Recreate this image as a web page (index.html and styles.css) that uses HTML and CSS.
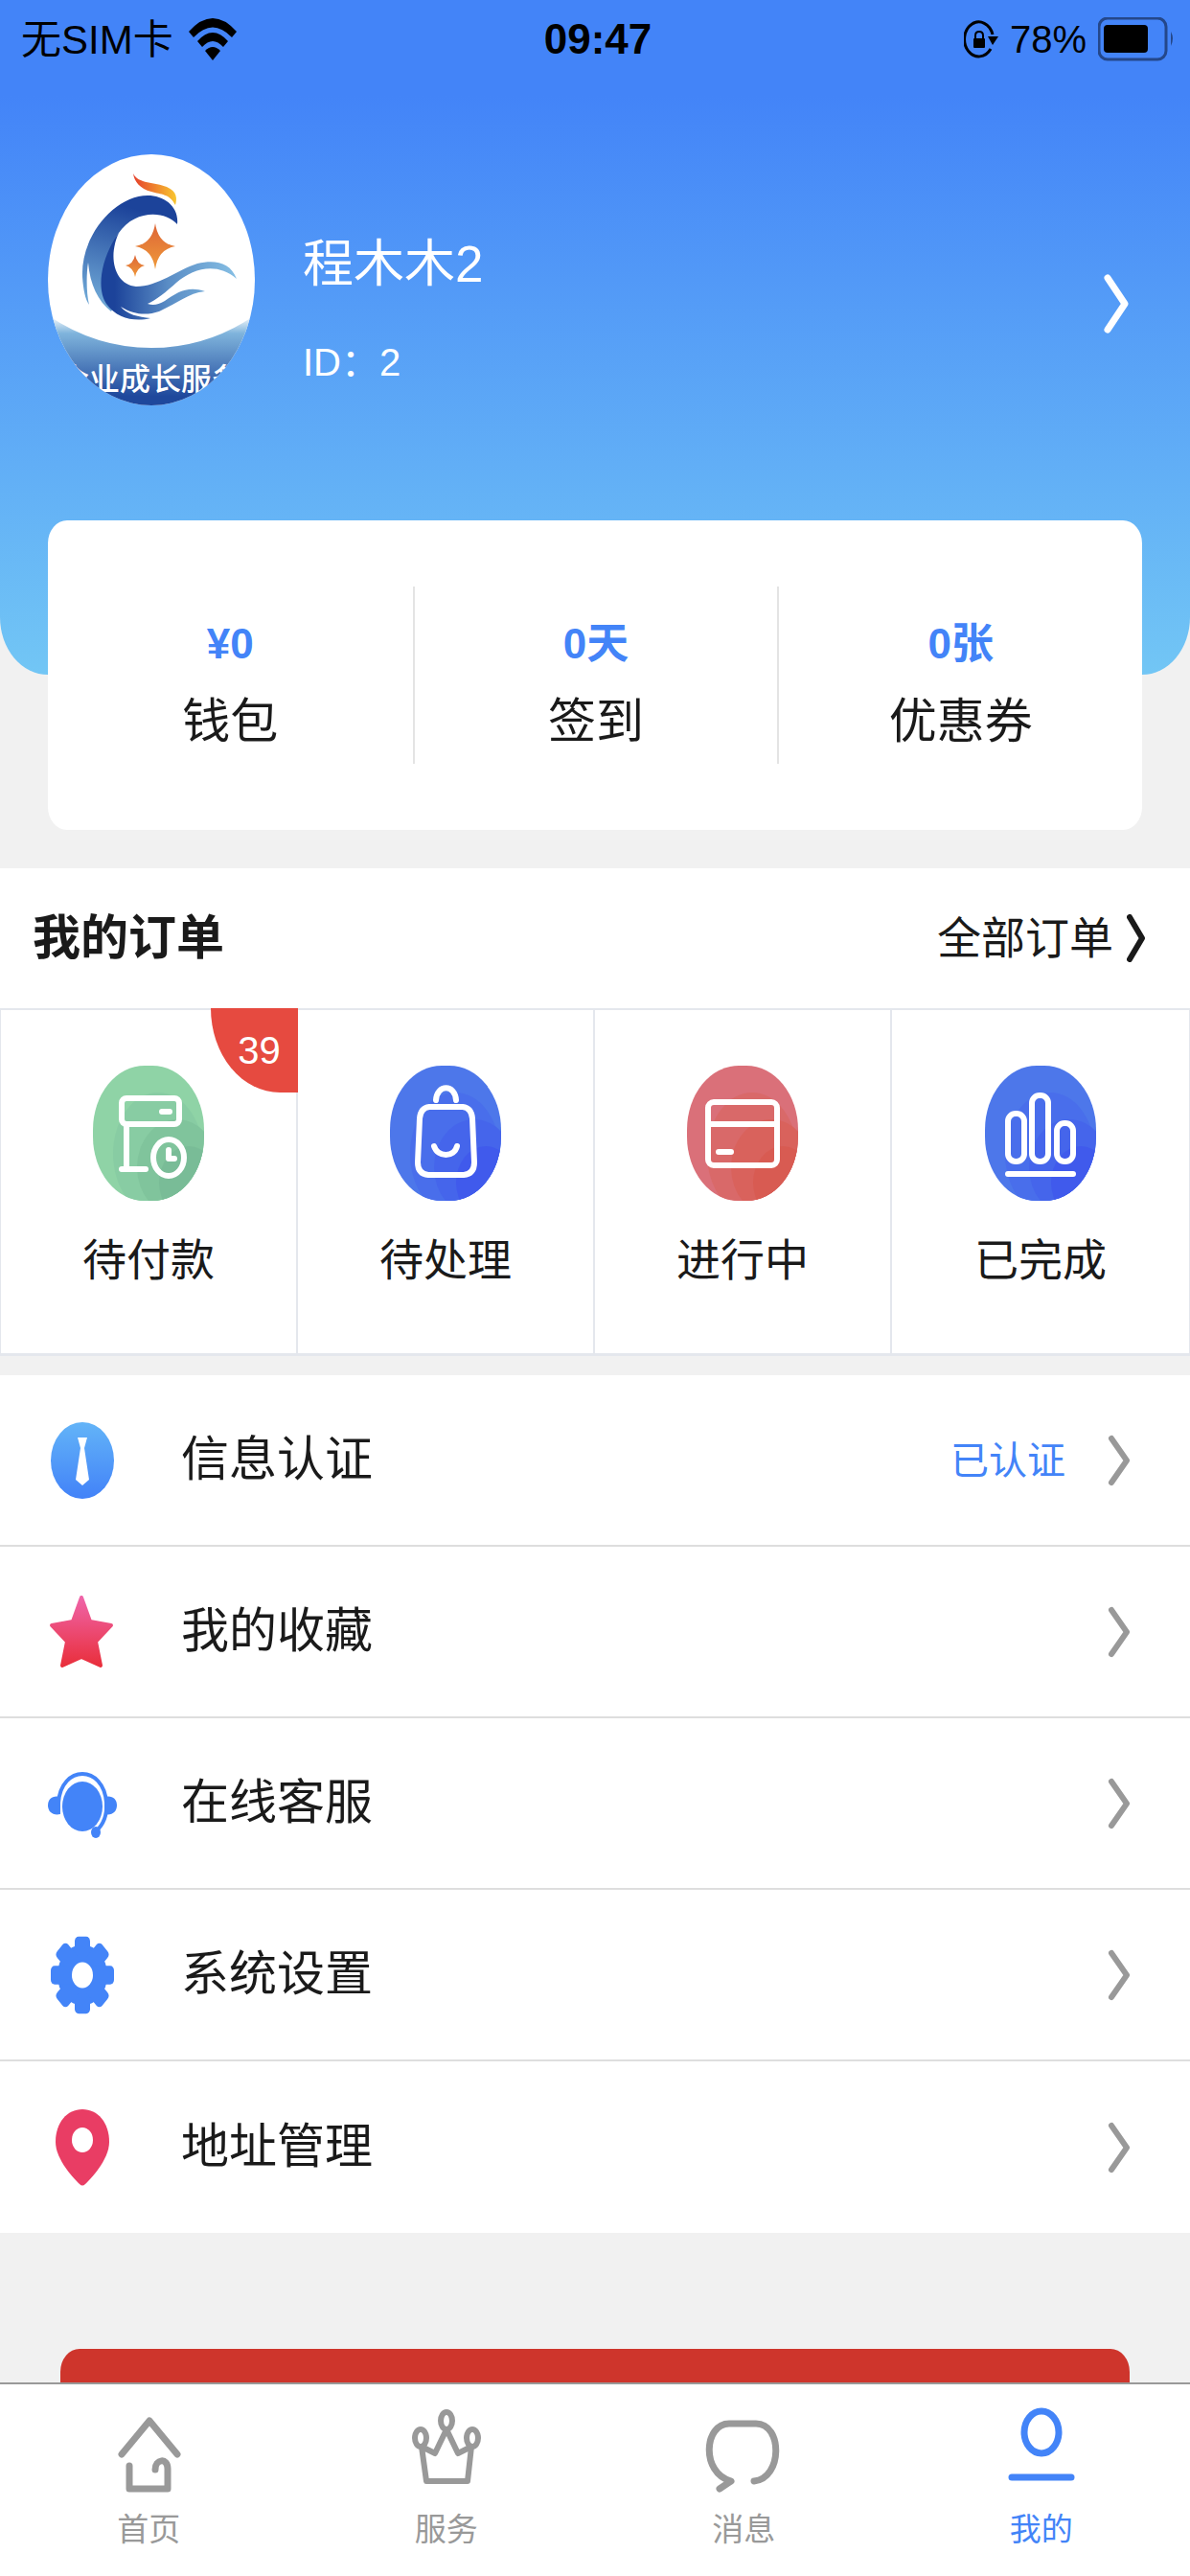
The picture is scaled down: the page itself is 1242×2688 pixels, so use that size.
FILE: index.html
```
<!DOCTYPE html>
<html lang="zh-CN">

<head>
    <meta charset="utf-8">
    <meta name="viewport" content="width=device-width, initial-scale=1">
    <title>我的</title>
    <link rel="stylesheet" href="styles.css">
</head>

<body>
    <main class="content">
        <header class="header">
            <div class="status-bar">
                <div class="status-left">
                    <span>无SIM卡</span>
                    <svg class="wifi" width="50" height="44" viewBox="0 0 50 44">
                        <path d="M0 14 Q25 -14 50 14 L45 20 Q25 -1 5 20Z" />
                        <path d="M9 24 Q25 6 41 24 L36 30 Q25 18 14 30Z" />
                        <path d="M17 34 Q25 26 33 34 L25 44Z" />
                    </svg>
                </div>
                <span class="status-time">09:47</span>
                <div class="status-right">
                    <svg width="36" height="40" viewBox="0 0 36 40">
                        <path d="M28 30 A15 18 0 1 1 30 15" fill="none" stroke="#000" stroke-width="3" />
                        <path d="M25 17 H36 L30 26Z" />
                        <rect x="10" y="19" width="12" height="10" rx="1" />
                        <path d="M12 20 V16 Q12 12 16 12 Q20 12 20 16 V20" fill="none" stroke="#000" stroke-width="2" />
                    </svg>
                    <span>78%</span>
                    <svg width="80" height="46" viewBox="0 0 80 46">
                        <rect x="1" y="1" width="70" height="43" rx="9" fill="none" stroke="#24478a" stroke-width="3" />
                        <rect x="6" y="8" width="46" height="29" rx="4" />
                        <path d="M76 15 Q80 22 76 30Z" fill="#24478a" />
                    </svg>
                </div>
            </div>

            <a class="profile" href="#">
                <svg class="avatar" width="216" height="262" viewBox="0 0 216 262">
                    <defs>
                        <clipPath id="avatarClip">
                            <ellipse cx="108" cy="131" rx="108" ry="131" />
                        </clipPath>
                        <linearGradient id="flame">
                            <stop offset="0" stop-color="#e5402c" />
                            <stop offset="1" stop-color="#f8c630" />
                        </linearGradient>
                        <linearGradient id="wave" x1="0.5" y1="0" x2="0.3" y2="1">
                            <stop offset="0.1" stop-color="#1c439a" />
                            <stop offset="0.9" stop-color="#6ba3d3" />
                        </linearGradient>
                        <linearGradient id="hand" x1="0" x2="1">
                            <stop offset="0.1" stop-color="#1c439a" />
                            <stop offset="0.5" stop-color="#5b8ec6" />
                            <stop offset="1" stop-color="#86bfe4" />
                        </linearGradient>
                        <linearGradient id="band" x1="0" y1="0" x2="0" y2="1">
                            <stop offset="0" stop-color="#ffffff" />
                            <stop offset="0.2" stop-color="#7fb4dc" />
                            <stop offset="0.9" stop-color="#1f489c" />
                        </linearGradient>
                        <linearGradient id="star4" x1="0" y1="0" x2="0" y2="1">
                            <stop offset="0" stop-color="#dd6436" />
                            <stop offset="1" stop-color="#ef9a3a" />
                        </linearGradient>
                    </defs>
                    <g clip-path="url(#avatarClip)">
                        <rect width="216" height="262" fill="#fff" />
                        <path d="M89 20 C94 31 112 29 124 34 C135 39 135 46 133 53 C127 41 118 42 108 39 C96 36 90 28 89 20Z" fill="url(#flame)" />
                        <path d="M135 73 C137 55 122 43 104 43 C70 43 34 85 36 128 C37 142 39 151 43 157 C40 145 40 125 42 113 C44 136 52 153 66 164 L80 140 C62 125 62 100 74 82 C90 58 122 58 135 73Z" fill="url(#wave)" />
                        <path d="M74 82 C56 106 50 140 61 156 C72 172 92 175 107 171 C95 170 82 167 76 159 C90 168 104 168 116 164 C136 155 146 145 164 143 C146 137 135 144 122 153 C115 157 110 158 104 156 C112 153 124 143 134 134 C152 119 176 112 197 130 C190 112 174 110 156 114 C134 121 115 138 92 138 C70 136 62 108 74 82Z" fill="url(#hand)" />
                        <path d="M112 72 Q115 93 133 96 Q115 99 112 120 Q109 99 91 96 Q109 93 112 72Z" fill="url(#star4)" />
                        <path d="M91 105 Q93 115 101 116 Q93 118 91 128 Q89 118 81 116 Q89 115 91 105Z" fill="url(#star4)" />
                        <path d="M0 168 Q50 202 108 202 Q166 202 216 168 V262 H0Z" fill="url(#band)" />
                        <text class="avatar-text" x="107" y="246" text-anchor="middle">企业成长服务</text>
                    </g>
                </svg>
                <div class="profile-info">
                    <div class="profile-name">程木木2</div>
                    <div class="profile-id">ID：2</div>
                </div>
                <svg class="profile-arrow" width="26" height="62" viewBox="0 0 26 62">
                    <path d="M4 4 L22 31 L4 58" />
                </svg>
            </a>
        </header>

        <section class="wallet">
            <a class="wallet-item" href="#">
                <strong>¥0</strong>
                <span>钱包</span>
            </a>
            <a class="wallet-item" href="#">
                <strong>0天</strong>
                <span>签到</span>
            </a>
            <a class="wallet-item" href="#">
                <strong>0张</strong>
                <span>优惠券</span>
            </a>
        </section>

        <section class="orders">
            <div class="orders-head">
                <h2>我的订单</h2>
                <a class="orders-all" href="#">
                    全部订单
                    <svg width="20" height="50" viewBox="0 0 20 50">
                        <path d="M3 3 L16 25 L3 47" />
                    </svg>
                </a>
            </div>
            <div class="orders-grid">
                <a class="order" href="#">
                    <span class="badge">39</span>
                    <svg class="order-icon" width="116" height="141" viewBox="0 0 116 141">
                        <clipPath id="blob">
                            <rect width="116" height="141" rx="54" ry="67" />
                        </clipPath>
                        <g clip-path="url(#blob)">
                            <rect width="116" height="141" fill="#8fd3a6" />
                            <ellipse cx="68" cy="92" rx="47" ry="64" fill="#88cca3" />
                            <ellipse cx="88" cy="106" rx="42" ry="50" fill="#80c49c" />
                            <ellipse cx="100" cy="122" rx="31" ry="38" fill="#79bc97" />
                        </g>
                        <g class="line">
                            <rect x="30" y="34" width="60" height="27" rx="5" />
                            <path d="M72 48 H80 M35 64 V108 M30 108 H55" />
                            <ellipse cx="79" cy="96" rx="16" ry="19" />
                            <path d="M79 88 V97 H85" />
                        </g>
                    </svg>
                    <span>待付款</span>
                </a>
                <a class="order" href="#">
                    <svg class="order-icon" width="116" height="141" viewBox="0 0 116 141">
                        <g clip-path="url(#blob)">
                            <rect width="116" height="141" fill="#4d77ea" />
                            <ellipse cx="68" cy="92" rx="47" ry="64" fill="#496eeb" />
                            <ellipse cx="88" cy="106" rx="42" ry="50" fill="#4565eb" />
                            <ellipse cx="100" cy="122" rx="31" ry="38" fill="#405aec" />
                        </g>
                        <g class="line">
                            <path d="M41 43 H76 Q85 44 86 55 L88 101 Q88 113 77 114 H40 Q29 113 29 101 L31 55 Q32 44 41 43Z" />
                            <path d="M48 36 C49 19 68 19 69 36" />
                            <path d="M46 84 C50 96 67 96 70 84" />
                        </g>
                    </svg>
                    <span>待处理</span>
                </a>
                <a class="order" href="#">
                    <svg class="order-icon" width="116" height="141" viewBox="0 0 116 141">
                        <g clip-path="url(#blob)">
                            <rect width="116" height="141" fill="#da7079" />
                            <ellipse cx="68" cy="92" rx="47" ry="64" fill="#d96969" />
                            <ellipse cx="88" cy="106" rx="42" ry="50" fill="#d9625c" />
                            <ellipse cx="100" cy="122" rx="31" ry="38" fill="#d85b52" />
                        </g>
                        <g class="line">
                            <rect x="22" y="38" width="72" height="66" rx="6" />
                            <path d="M22 61 H94 M33 90 H46" />
                        </g>
                    </svg>
                    <span>进行中</span>
                </a>
                <a class="order" href="#">
                    <svg class="order-icon" width="116" height="141" viewBox="0 0 116 141">
                        <g clip-path="url(#blob)">
                            <rect width="116" height="141" fill="#4d77ea" />
                            <ellipse cx="68" cy="92" rx="47" ry="64" fill="#496eeb" />
                            <ellipse cx="88" cy="106" rx="42" ry="50" fill="#4565eb" />
                            <ellipse cx="100" cy="122" rx="31" ry="38" fill="#405aec" />
                        </g>
                        <g class="line">
                            <rect x="24" y="50" width="17" height="50" rx="8" />
                            <rect x="49" y="31" width="17" height="69" rx="8" />
                            <rect x="75" y="60" width="17" height="40" rx="8" />
                            <path d="M24 113 H92" />
                        </g>
                    </svg>
                    <span>已完成</span>
                </a>
            </div>
        </section>

        <nav class="menu">
            <a class="menu-item" href="#">
                <svg width="72" height="82" viewBox="0 0 72 82">
                    <linearGradient id="tieBg" x1="0" y1="0" x2="0" y2="1">
                        <stop offset="0" stop-color="#63b4f8" />
                        <stop offset="1" stop-color="#4282f8" />
                    </linearGradient>
                    <ellipse cx="36" cy="41" rx="33" ry="40" fill="url(#tieBg)" />
                    <path d="M31 17 H41 L38 28 L43 61 L36 67 L29 61 L34 28Z" fill="#fff" />
                </svg>
                <span class="menu-text">信息认证</span>
                <span class="menu-state">已认证</span>
                <svg class="menu-arrow" width="24" height="54" viewBox="0 0 24 54">
                    <path d="M4 4 L20 27 L4 50" />
                </svg>
            </a>
            <a class="menu-item" href="#">
                <svg width="72" height="82" viewBox="0 0 72 82">
                    <linearGradient id="starBg" x1="0" y1="0" x2="0" y2="1">
                        <stop offset="0" stop-color="#ef64a8" />
                        <stop offset="1" stop-color="#e92f3c" />
                    </linearGradient>
                    <path d="M35 5 L44 30 L66 34 L50 51 L55 76 L35 67 L15 76 L20 51 L4 34 L26 30Z" fill="url(#starBg)" stroke="url(#starBg)" stroke-width="4" stroke-linejoin="round" />
                </svg>
                <span class="menu-text">我的收藏</span>
                <svg class="menu-arrow" width="24" height="54" viewBox="0 0 24 54">
                    <path d="M4 4 L20 27 L4 50" />
                </svg>
            </a>
            <a class="menu-item" href="#">
                <svg width="72" height="82" viewBox="0 0 72 82" fill="#4384f8">
                    <ellipse cx="36" cy="44" rx="21" ry="26" />
                    <path d="M11 40 C14 0 58 0 61 40 C62 54 58 63 50 70" fill="none" stroke="#4384f8" stroke-width="4" />
                    <path d="M13 34 V52 C5 54 0 49 0 43 C0 36 5 32 13 34Z" />
                    <path d="M59 34 V52 C67 54 72 49 72 43 C72 36 67 32 59 34Z" />
                    <ellipse cx="50" cy="71" rx="5" ry="6" />
                </svg>
                <span class="menu-text">在线客服</span>
                <svg class="menu-arrow" width="24" height="54" viewBox="0 0 24 54">
                    <path d="M4 4 L20 27 L4 50" />
                </svg>
            </a>
            <a class="menu-item" href="#">
                <svg width="72" height="82" viewBox="0 0 72 82" fill="#4384f8">
                    <g transform="translate(36 41) scale(1 1.22)">
                        <circle r="26" />
                        <rect x="-8" y="-33" width="16" height="66" rx="4" />
                        <rect x="-8" y="-33" width="16" height="66" rx="4" transform="rotate(45)" />
                        <rect x="-8" y="-33" width="16" height="66" rx="4" transform="rotate(90)" />
                        <rect x="-8" y="-33" width="16" height="66" rx="4" transform="rotate(135)" />
                        <circle r="11" fill="#fff" />
                    </g>
                </svg>
                <span class="menu-text">系统设置</span>
                <svg class="menu-arrow" width="24" height="54" viewBox="0 0 24 54">
                    <path d="M4 4 L20 27 L4 50" />
                </svg>
            </a>
            <a class="menu-item" href="#">
                <svg width="72" height="82" viewBox="0 0 72 82">
                    <path d="M36 1 C20 1 8 15 8 35 C8 54 28 74 33 79 Q36 82 39 79 C44 74 64 54 64 35 C64 15 52 1 36 1Z" fill="#e93d64" />
                    <ellipse cx="36" cy="33" rx="11" ry="13" fill="#fff" />
                </svg>
                <span class="menu-text">地址管理</span>
                <svg class="menu-arrow" width="24" height="54" viewBox="0 0 24 54">
                    <path d="M4 4 L20 27 L4 50" />
                </svg>
            </a>
        </nav>

        <button class="logout" type="button" aria-label="退出"></button>
    </main>

    <nav class="tabbar">
        <a class="tab" href="#">
            <svg width="74" height="92" viewBox="0 0 74 92">
                <path d="M9 51 L38 16 L67 51" />
                <path d="M17 63 V87 H57 V66 C57 54 44 56 44 67" />
            </svg>
            <span>首页</span>
        </a>
        <a class="tab tab-crown" href="#">
            <svg width="74" height="92" viewBox="0 0 74 92">
                <ellipse cx="37" cy="16" rx="6" ry="9" />
                <ellipse cx="10" cy="34" rx="6" ry="9" />
                <ellipse cx="64" cy="34" rx="6" ry="9" />
                <path d="M11 43 L25 50 L37 25 L49 50 L63 43 L59 79 H16Z" />
            </svg>
            <span>服务</span>
        </a>
        <a class="tab" href="#">
            <svg width="74" height="92" viewBox="0 0 74 92">
                <path d="M12 87 L24 79 C-8 70 -4 19 22 19 H50 C78 19 78 76 48 79" />
            </svg>
            <span>消息</span>
        </a>
        <a class="tab active" href="#">
            <svg width="74" height="92" viewBox="0 0 74 92">
                <ellipse cx="37" cy="28" rx="18" ry="22" />
                <path d="M6 75 H68" />
            </svg>
            <span>我的</span>
        </a>
    </nav>
</body>

</html>
```
FILE: styles.css
```
* {
    box-sizing: border-box;
}

body {
    display: flex;
    flex-direction: column;
    height: 100vh;
    margin: 0;
    background-color: #f1f1f1;
    color: #1a1a1a;
    font-family: "Liberation Sans", "Noto Sans CJK SC", sans-serif;
    line-height: 1.5;
}

a {
    color: inherit;
    text-decoration: none;
}

svg {
    display: block;
    flex-shrink: 0;
}

.content {
    flex: 1;
    min-height: 0;
    overflow-y: auto;
    scrollbar-width: none;
}

/* header */
.header {
    height: 704px;
    background: linear-gradient(#4384f8 100px, #72c6f5);
    border-radius: 0 0 50px 50px / 0 0 60px 60px;
}

.status-bar {
    display: grid;
    grid-template-columns: 1fr auto 1fr;
    align-items: center;
    height: 82px;
    padding: 0 16px 0 22px;
    color: #000;
    font-size: 40px;
}

.status-left,
.status-right {
    display: flex;
    align-items: center;
    gap: 16px;
}

.status-left {
    font-size: 42px;
}

.status-right {
    justify-content: flex-end;
    gap: 12px;
}

.status-time {
    font-size: 44px;
    font-weight: bold;
}

.profile {
    display: flex;
    align-items: center;
    padding: 79px 64px 0 50px;
    color: #fff;
}

.avatar-text {
    fill: #fff;
    font-size: 32px;
    font-weight: 500;
}

.profile-info {
    flex: 1;
    margin: 60px 0 0 50px;
}

.profile-name {
    font-size: 53px;
    line-height: 80px;
}

.profile-id {
    margin-top: 32px;
    font-size: 40px;
    line-height: 60px;
}

.profile-arrow {
    margin-top: 50px;
    fill: none;
    stroke: #fff;
    stroke-width: 7;
    stroke-linecap: round;
    stroke-linejoin: round;
}

/* wallet card */
.wallet {
    display: grid;
    grid-template-columns: repeat(3, 1fr);
    margin: -161px 50px 0;
    padding: 69px 0;
    background-color: #fff;
    border-radius: 20px / 24px;
}

.wallet-item {
    display: flex;
    flex-direction: column;
    align-items: center;
    padding: 27px 0 6px;
    border-left: 2px solid #e4e4e4;
}

.wallet-item:first-child {
    border-left: none;
}

.wallet-item strong {
    color: #4384f8;
    font-size: 44px;
    line-height: 66px;
}

.wallet-item span {
    margin-top: 11px;
    font-size: 50px;
    line-height: 75px;
}

/* orders */
.orders {
    margin-top: 40px;
    background-color: #fff;
}

.orders-head {
    display: flex;
    align-items: center;
    justify-content: space-between;
    height: 146px;
    padding: 0 46px 0 34px;
}

.orders-head h2 {
    margin: 0;
    font-size: 50px;
}

.orders-all {
    display: flex;
    align-items: center;
    gap: 14px;
    font-size: 46px;
}

.orders-all svg {
    fill: none;
    stroke: #1a1a1a;
    stroke-width: 6;
    stroke-linecap: round;
    stroke-linejoin: round;
}

.orders-grid {
    display: grid;
    grid-template-columns: repeat(4, 1fr);
    border: 2px solid #e4e7ed;
    border-width: 2px 1px 3px;
}

.order {
    position: relative;
    display: flex;
    flex-direction: column;
    align-items: center;
    height: 358px;
    padding-top: 58px;
    border-right: 2px solid #e4e7ed;
    font-size: 46px;
    line-height: 70px;
}

.order:last-child {
    border-right: none;
}

.order-icon {
    margin-bottom: 27px;
}

.line {
    fill: none;
    stroke: #fff;
    stroke-width: 6;
    stroke-linecap: round;
    stroke-linejoin: round;
}

.badge {
    position: absolute;
    top: -2px;
    right: -2px;
    width: 91px;
    height: 88px;
    padding-left: 10px;
    background-color: #e64a40;
    border-bottom-left-radius: 72px 88px;
    color: #fff;
    font-size: 40px;
    line-height: 88px;
    text-align: center;
}

/* menu */
.menu {
    margin-top: 20px;
    background-color: #fff;
}

.menu-item {
    display: flex;
    align-items: center;
    height: 179px;
    padding: 0 62px 0 50px;
    border-bottom: 2px solid #dedede;
}

.menu-item:last-child {
    border-bottom: none;
}

.menu-text {
    flex: 1;
    margin-left: 67px;
    font-size: 50px;
}

.menu-state {
    margin-right: 44px;
    color: #4384f8;
    font-size: 40px;
}

.menu-arrow {
    fill: none;
    stroke: #999;
    stroke-width: 6;
    stroke-linecap: round;
    stroke-linejoin: round;
}

.logout {
    display: block;
    width: calc(100% - 126px);
    height: 140px;
    margin: 121px auto 60px;
    background-color: #ce352c;
    border: none;
    border-radius: 20px / 24px;
}

/* bottom tabs */
.tabbar {
    display: grid;
    grid-template-columns: repeat(4, 1fr);
    padding: 22px 0 24px;
    background-color: #fff;
    border-top: 2px solid #999;
}

.tab {
    display: flex;
    flex-direction: column;
    align-items: center;
    gap: 14px;
    color: #999;
    font-size: 33px;
    line-height: 48px;
}

.tab svg {
    overflow: visible;
    fill: none;
    stroke: currentColor;
    stroke-width: 7;
    stroke-linecap: round;
    stroke-linejoin: round;
}

.tab-crown svg {
    stroke-width: 6;
}

.tab.active {
    color: #4384f8;
}
```
